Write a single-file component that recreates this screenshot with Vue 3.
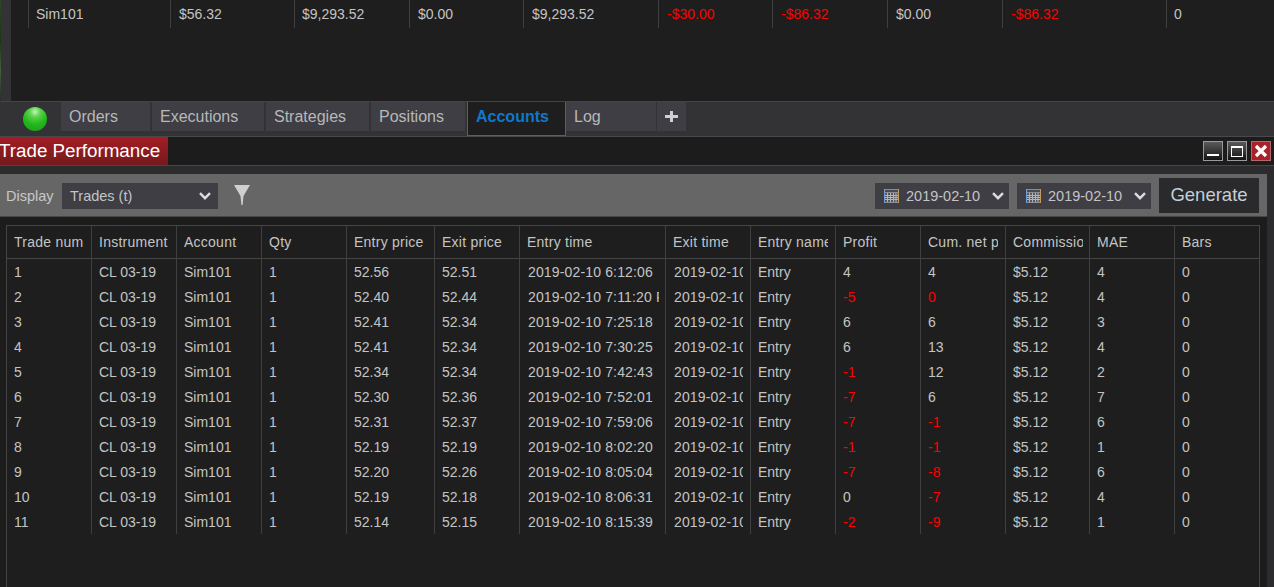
<template>
  <div class="platform">
    <!-- accounts grid at the top -->
    <div class="top-panel">
      <div class="edge-strip"></div>
      <div class="top-grid">
        <table class="grid">
          <colgroup><col v-for="(w, i) in accountCols" :key="i" :style="{ width: w + 'px' }" /></colgroup>
          <tbody>
            <tr class="account-row">
              <td v-for="(c, i) in accountRow" :key="i" :class="{ neg: c.startsWith('-') }"><div class="cell">{{ c }}</div></td>
            </tr>
          </tbody>
        </table>
      </div>
    </div>

    <!-- tab strip -->
    <div class="tabbar">
      <span class="orb"></span>
      <div class="tabs">
        <div v-for="t in tabs" :key="t.label" class="tab" :class="{ active: t.label === activeTab }" :style="{ width: t.w + 'px' }">{{ t.label }}</div>
        <div class="tab-add">
          <svg width="13" height="13" viewBox="0 0 13 13"><path d="M6.5 1v11M0 6.5h13" stroke="#d0d0d0" stroke-width="3" /></svg>
        </div>
      </div>
    </div>

    <!-- window title -->
    <div class="titlebar">
      <div class="title">Trade Performance</div>
      <div class="win-btns">
        <div class="win-btn"><svg width="18" height="18" viewBox="0 0 18 18"><rect x="3" y="12" width="12" height="2" fill="#fff" /></svg></div>
        <div class="win-btn"><svg width="18" height="18" viewBox="0 0 18 18"><rect x="3.5" y="4.5" width="11" height="10" fill="none" stroke="#fff" /><rect x="3" y="4" width="12" height="2" fill="#fff" /></svg></div>
        <div class="win-btn close"><svg width="18" height="18" viewBox="0 0 18 18"><path d="M4 4l10 10M14 4L4 14" stroke="#fff" stroke-width="3.2" /></svg></div>
      </div>
    </div>

    <div class="lower">
      <div class="toolbar">
        <span class="display-label">Display</span>
        <div class="select display-select">
          <span>Trades (t)</span>
          <svg class="chevron" width="12" height="8" viewBox="0 0 12 8"><path d="M1 1.2l5 5 5-5" fill="none" stroke="#ddd" stroke-width="2.4" /></svg>
        </div>
        <svg class="filter" width="16" height="20" viewBox="0 0 16 20"><path d="M0 0h16L9.5 11 8.6 20H7.4L6.5 11z" fill="#cfcfcf" /></svg>
        <div class="right-tools">
          <div v-for="n in 2" :key="n" class="select date-select">
            <svg class="cal" width="15" height="14" viewBox="0 0 15 14">
              <rect width="15" height="14" fill="#8a8f96" />
              <rect x="0" y="0" width="1" height="14" fill="#6f9fd6" />
              <rect x="14" y="0" width="1" height="14" fill="#c79a62" />
              <rect x="1" y="1" width="13" height="2" fill="#4a4a52" />
              <rect x="1" y="4" width="13" height="9" fill="#55555c" />
              <path d="M1 6.5h13M1 8.5h13M1 10.5h13M3.5 4v9M6.5 4v9M9.5 4v9M12 4v9" stroke="#b4b4b8" stroke-width="1" />
            </svg>
            <span>2019-02-10</span>
            <svg class="chevron" width="12" height="8" viewBox="0 0 12 8"><path d="M1 1.2l5 5 5-5" fill="none" stroke="#ddd" stroke-width="2.4" /></svg>
          </div>
          <div class="generate">Generate</div>
        </div>
      </div>

      <div class="trades-wrap">
        <div class="trades-box">
          <table class="grid trades">
            <colgroup><col v-for="(w, i) in tradeCols" :key="i" :style="{ width: w + 'px' }" /></colgroup>
            <thead>
              <tr><th v-for="h in headers" :key="h"><div class="cell">{{ h }}</div></th></tr>
            </thead>
            <tbody>
              <tr v-for="t in trades" :key="t.num">
                <td><div class="cell">{{ t.num }}</div></td>
                <td><div class="cell">CL 03-19</div></td>
                <td><div class="cell">Sim101</div></td>
                <td><div class="cell">1</div></td>
                <td><div class="cell">{{ t.entry }}</div></td>
                <td><div class="cell">{{ t.exit }}</div></td>
                <td><div class="cell">2019-02-10 {{ t.entryTime }}</div></td>
                <td><div class="cell">2019-02-10 {{ t.exitTime }}</div></td>
                <td><div class="cell">Entry</div></td>
                <td :class="{ neg: t.profit < 0 }"><div class="cell">{{ t.profit }}</div></td>
                <td :class="{ neg: t.cum < 0 || t.num === 2 }"><div class="cell">{{ t.cum }}</div></td>
                <td><div class="cell">$5.12</div></td>
                <td><div class="cell">{{ t.mae }}</div></td>
                <td><div class="cell">0</div></td>
              </tr>
            </tbody>
          </table>
        </div>
      </div>
    </div>
  </div>
</template>

<script setup>
const activeTab = 'Accounts'

const tabs = [
  { label: 'Orders', w: 89 },
  { label: 'Executions', w: 112 },
  { label: 'Strategies', w: 103 },
  { label: 'Positions', w: 94 },
  { label: 'Accounts', w: 99 },
  { label: 'Log', w: 90 }
]

const accountCols = [18, 142, 124, 115, 114, 135, 114, 115, 115, 164, 107]
const accountRow = ['', 'Sim101', '$56.32', '$9,293.52', '$0.00', '$9,293.52', '-$30.00', '-$86.32', '$0.00', '-$86.32', '0']

const tradeCols = [85, 85, 85, 85, 88, 85, 146, 85, 85, 85, 85, 84, 85, 84]
const headers = ['Trade number', 'Instrument', 'Account', 'Qty', 'Entry price', 'Exit price', 'Entry time', 'Exit time', 'Entry name', 'Profit', 'Cum. net profit', 'Commission', 'MAE', 'Bars']

const trades = [
  { num: 1, entry: '52.56', exit: '52.51', entryTime: '6:12:06', exitTime: '6:14:10', profit: 4, cum: 4, mae: 4 },
  { num: 2, entry: '52.40', exit: '52.44', entryTime: '7:11:20 PM', exitTime: '7:12:02', profit: -5, cum: 0, mae: 4 },
  { num: 3, entry: '52.41', exit: '52.34', entryTime: '7:25:18', exitTime: '7:26:40', profit: 6, cum: 6, mae: 3 },
  { num: 4, entry: '52.41', exit: '52.34', entryTime: '7:30:25', exitTime: '7:31:15', profit: 6, cum: 13, mae: 4 },
  { num: 5, entry: '52.34', exit: '52.34', entryTime: '7:42:43', exitTime: '7:44:01', profit: -1, cum: 12, mae: 2 },
  { num: 6, entry: '52.30', exit: '52.36', entryTime: '7:52:01', exitTime: '7:53:22', profit: -7, cum: 6, mae: 7 },
  { num: 7, entry: '52.31', exit: '52.37', entryTime: '7:59:06', exitTime: '8:00:12', profit: -7, cum: -1, mae: 6 },
  { num: 8, entry: '52.19', exit: '52.19', entryTime: '8:02:20', exitTime: '8:03:09', profit: -1, cum: -1, mae: 1 },
  { num: 9, entry: '52.20', exit: '52.26', entryTime: '8:05:04', exitTime: '8:05:50', profit: -7, cum: -8, mae: 6 },
  { num: 10, entry: '52.19', exit: '52.18', entryTime: '8:06:31', exitTime: '8:07:44', profit: 0, cum: -7, mae: 4 },
  { num: 11, entry: '52.14', exit: '52.15', entryTime: '8:15:39', exitTime: '8:16:28', profit: -2, cum: -9, mae: 1 }
]
</script>

<style>
html, body { margin: 0; background: #2c2c2e; }
</style>

<style scoped>
.platform {
  width: 1274px;
  height: 587px;
  overflow: hidden;
  display: flex;
  flex-direction: column;
  font-family: "Liberation Sans", Arial, sans-serif;
  font-size: 14px;
  color: #c4c4c4;
  background: #2c2c2e;
}

.top-panel { height: 101px; display: flex; background: #333336; }
.edge-strip { width: 1px; background: linear-gradient(#2f4a22, #1d3318 40%, #46603a 70%, #2a2a2a); margin-right: 10px; }
.top-grid { flex: 1; background: #1e1e1e; }

.grid { border-collapse: separate; border-spacing: 0; table-layout: fixed; }
.grid td, .grid th {
  padding: 0 6px 0 7px;
  border-right: 1px solid #3f3f3f;
  font-weight: normal;
  text-align: left;
  box-sizing: border-box;
}
.grid td:last-child, .grid th:last-child { border-right: none; }
.cell { overflow: hidden; white-space: nowrap; }
.neg { color: #f00; }

.top-grid .grid { width: 1263px; }
.account-row td { height: 28px; padding-left: 8px; }
.account-row td:first-child { padding: 0; }
.account-row td:nth-child(2), .account-row td:nth-child(4), .account-row td:last-child { padding-left: 7px; }

.tabbar {
  height: 36px;
  box-sizing: border-box;
  display: flex;
  align-items: flex-start;
  padding-left: 23px;
  background: #333336;
  border-top: 1px solid #444;
  border-bottom: 1px solid #494949;
}
.orb {
  width: 24px;
  height: 24px;
  margin: 5px 14px 0 0;
  border-radius: 50%;
  background: radial-gradient(circle at 50% 20%, #c4f2b8 0, #5ad24a 24%, #22b81d 56%, #1b9a18 100%);
}
.tabs { display: flex; gap: 2px; }
.tab {
  height: 29px;
  line-height: 30px;
  padding-left: 8px;
  box-sizing: border-box;
  background: #3e3e44;
  font-size: 16px;
  color: #b8b8b8;
}
.tab.active {
  height: 34px;
  margin-right: -2px;
  line-height: 30px;
  background: #1e1e1e;
  border: 1px solid #1273bd;
  border-top: none;
  color: #0f78cc;
  font-weight: bold;
}
.tab-add {
  width: 29px;
  height: 29px;
  margin-left: -1px;
  display: flex;
  align-items: center;
  justify-content: center;
  background: #3e3e44;
}

.titlebar {
  height: 29px;
  box-sizing: border-box;
  display: flex;
  justify-content: space-between;
  background: #1c1c1c;
  border-bottom: 1px solid #474747;
}
.title {
  width: 168px;
  height: 28px;
  line-height: 27px;
  background: linear-gradient(#a41d25, #741a1c);
  color: #fff;
  font-size: 18.8px;
  text-indent: -1px;
  white-space: nowrap;
}
.win-btns { display: flex; gap: 4px; padding: 4px 3px 0 0; }
.win-btn {
  width: 20px;
  height: 20px;
  box-sizing: border-box;
  border: 1px solid #9a9a9a;
  background: linear-gradient(#5a5a5a, #141414);
}
.win-btn svg { display: block; }
.win-btn.close { border-color: #b06a6e; background: #a9222b; }

.lower {
  flex: 1;
  min-height: 0;
  display: flex;
  flex-direction: column;
  padding: 8px 7px 0 0;
  background: #2c2c2e;
}
.toolbar {
  height: 43px;
  flex-shrink: 0;
  box-sizing: border-box;
  display: flex;
  align-items: center;
  padding: 2px 8px 0 6px;
  background: #666;
  border-bottom: 1px solid #474747;
  font-size: 14.5px;
}
.display-label { width: 56px; color: #c8c8c8; }
.select {
  height: 26px;
  display: flex;
  align-items: center;
  box-sizing: border-box;
  background: #3e3e44;
  color: #c4c4c4;
}
.chevron { margin-left: auto; }
.display-select { width: 156px; padding: 0 7px 0 8px; }
.filter { margin-left: 16px; margin-top: -2px; }
.right-tools { margin-left: auto; align-self: flex-start; margin-top: 2px; display: flex; align-items: flex-start; gap: 8px; }
.date-select { width: 134px; padding: 0 5px 0 9px; margin-top: 5px; }
.cal { margin-right: 7px; }
.generate {
  width: 100px;
  height: 35px;
  line-height: 34px;
  box-sizing: border-box;
  text-align: center;
  background: #2a2a2d;
  font-size: 18.5px;
  color: #c6ced6;
}

.trades-wrap {
  flex: 1;
  min-height: 0;
  display: flex;
  padding: 8px 7px 0 6px;
  background: #1c1c1c;
}
.trades-box {
  width: 1254px;
  box-sizing: border-box;
  border: 1px solid #454545;
  border-bottom: none;
  background: #1e1e1e;
}
.trades { width: 1252px; }
.trades th { height: 33px; border-bottom: 1px solid #454545; letter-spacing: 0.25px; }
.trades th:first-child { padding-right: 8px; }
.trades td { height: 25px; }
.trades td:nth-child(7), .trades td:nth-child(8) { padding-left: 8px; letter-spacing: 0.15px; }
.trades td:nth-child(8), .trades th:nth-child(9), .trades th:nth-child(11) { padding-right: 7px; }
</style>
